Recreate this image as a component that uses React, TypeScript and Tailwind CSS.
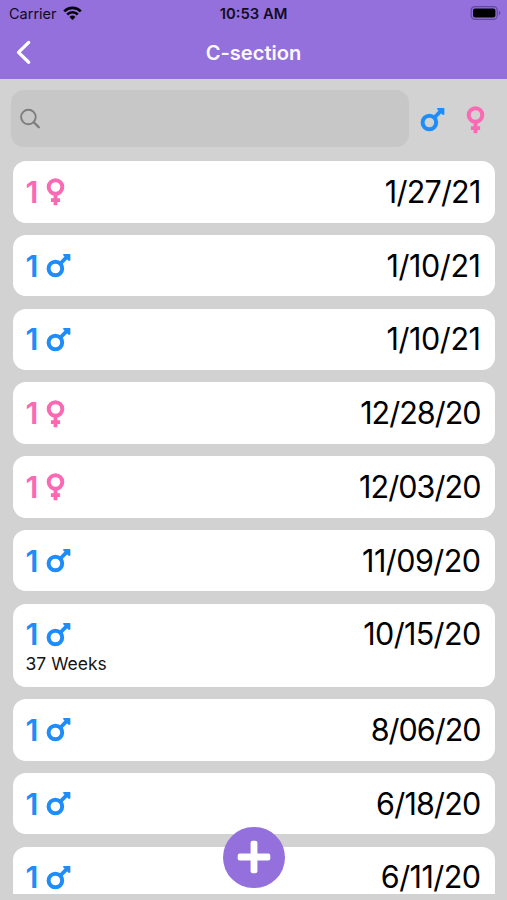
import React from 'react';

type Sex = 'male' | 'female';

interface Birth {
  sex: Sex;
  date: string;
  tracking: string;
  note?: string;
}

const births: Birth[] = [
  { sex: 'female', date: '1/27/21', tracking: 'tracking-[-0.8px]' },
  { sex: 'male', date: '1/10/21', tracking: 'tracking-[-0.45px]' },
  { sex: 'male', date: '1/10/21', tracking: 'tracking-[-0.45px]' },
  { sex: 'female', date: '12/28/20', tracking: 'tracking-[-1px]' },
  { sex: 'female', date: '12/03/20', tracking: 'tracking-[-0.93px]' },
  { sex: 'male', date: '11/09/20', tracking: 'tracking-[-0.55px]' },
  { sex: 'male', date: '10/15/20', tracking: 'tracking-[-0.65px]', note: '37 Weeks' },
  { sex: 'male', date: '8/06/20', tracking: 'tracking-[-1px]' },
  { sex: 'male', date: '6/18/20', tracking: 'tracking-[-0.8px]' },
  { sex: 'male', date: '6/11/20', tracking: 'tracking-[-0.55px]' },
];

function SexIcon({ sex }: { sex: Sex }) {
  if (sex === 'male') {
    return (
      <svg width="26" height="30" viewBox="0 0 26 30" className="text-[#1e8cf9]">
        <circle cx="9.4" cy="18.5" r="6.8" fill="none" stroke="currentColor" strokeWidth="4" />
        <path d="M13.8 14.1 20.5 7.4" stroke="currentColor" strokeWidth="3.7" />
        <path d="M18 4h5.6a.8.8 0 0 1 .8.8v5.6l-1.6.5-6.1-6.1z" fill="currentColor" />
      </svg>
    );
  }
  return (
    <svg width="26" height="30" viewBox="0 0 26 30" className="text-[#fb69b4]">
      <circle cx="9.5" cy="11" r="6.8" fill="none" stroke="currentColor" strokeWidth="4" />
      <path d="M9.5 18v11.2M4.9 24.1h9.2" fill="none" stroke="currentColor" strokeWidth="3.8" />
    </svg>
  );
}

function StatusBar() {
  return (
    <div className="flex h-[28px] items-center pl-[9px] pr-[6px] text-[#120b22]">
      <div className="flex flex-1 items-center gap-[6px]">
        <span className="text-[14.5px] leading-none">Carrier</span>
        <svg width="19" height="15" viewBox="0 0 19 15" fill="none" stroke="#06030c" strokeWidth="2.6" className="-mt-[1.5px]">
          <path d="M1.2 5.3a11.7 11.7 0 0 1 16.6 0" />
          <path d="M4.2 8.5a7.5 7.5 0 0 1 10.6 0" />
          <path d="M9.5 14 6.5 11a4.3 4.3 0 0 1 6 0z" fill="#06030c" stroke="none" />
        </svg>
      </div>
      <span className="pr-[3px] text-[14.8px] font-semibold leading-none">10:53 AM</span>
      <div className="flex flex-1 justify-end">
        <svg width="31" height="14" viewBox="0 0 31 14" className="-mt-[1.5px]">
          <rect x="1.2" y=".7" width="26" height="12.6" rx="3.6" fill="none" stroke="#62499a" strokeWidth="1.2" />
          <rect x="3" y="2.5" width="22.4" height="9" rx="2" fill="#000" />
          <path d="M28.8 4.8c2 .7 2 3.7 0 4.4z" fill="#62499a" />
        </svg>
      </div>
    </div>
  );
}

function BirthCard({ birth }: { birth: Birth }) {
  return (
    <li
      className={`shrink-0 rounded-[13px] bg-white pl-[12.5px] pr-[14px] ${birth.note ? 'h-[83.4px]' : 'h-[61.5px]'}`}
    >
      <div className="flex h-[61.5px] items-center justify-between pt-[0.6px]">
        <div
          className={`flex items-center gap-[3.5px] ${birth.sex === 'male' ? 'text-[#1e8cf9]' : 'text-[#fb69b4]'}`}
        >
          <span className="w-[17px] text-[30.5px] font-semibold leading-none">1</span>
          <span className="-mt-[1.6px]">
            <SexIcon sex={birth.sex} />
          </span>
        </div>
        <span className={`text-[30.5px] leading-none text-black ${birth.tracking}`}>{birth.date}</span>
      </div>
      {birth.note && <p className="-mt-[11px] text-[17.5px] leading-[20px] text-[#151515]">{birth.note}</p>}
    </li>
  );
}

export default function App() {
  return (
    <div className="relative flex h-[900px] w-[507px] flex-col overflow-hidden bg-[#d2d2d2] font-['Inter','Liberation_Sans',sans-serif]">
      <header className="h-[79px] shrink-0 bg-[#9370db]">
        <StatusBar />
        <div className="flex h-[50px] items-center">
          <button className="flex w-[60px] pl-[16px]" aria-label="Back">
            <svg width="16" height="26" viewBox="0 0 16 26" fill="none" stroke="#fff" strokeWidth="3.3" strokeLinecap="round" strokeLinejoin="round">
              <path d="M12.7 2.4 2.5 12.4l10.2 9.8" />
            </svg>
          </button>
          <h1 className="flex-1 text-center text-[20.1px] font-semibold leading-none text-[#fcf8ff]">C-section</h1>
          <div className="w-[60px]" />
        </div>
      </header>

      <div className="flex h-[82.2px] shrink-0 pl-[11px] pt-[11px]">
        <div className="flex h-[57px] w-[398px] items-center rounded-[13px] bg-[#c7c7c7] pl-[9px]">
          <svg width="22" height="22" viewBox="0 0 22 22" fill="none" stroke="#7d7d7d" strokeWidth="1.9" strokeLinecap="round">
            <circle cx="8.4" cy="9" r="7.3" />
            <path d="m13.8 14.3 5 4.9" strokeWidth="2.3" />
          </svg>
        </div>
        <div className="flex h-[57px] items-center gap-[20px] pl-[11px]">
          <SexIcon sex="male" />
          <SexIcon sex="female" />
        </div>
      </div>

      <ul className="flex h-[732.8px] shrink-0 flex-col gap-[12.22px] overflow-hidden pl-[13px] pr-[12.5px]">
        {births.map((birth, i) => (
          <BirthCard key={i} birth={birth} />
        ))}
      </ul>

      <button
        className="absolute left-[223px] top-[826.5px] flex size-[61.5px] items-center justify-center rounded-full bg-[#9370db]"
        aria-label="Add"
      >
        <svg width="34" height="34" viewBox="0 0 34 34" fill="#fff">
          <rect x="13.6" y=".7" width="6.8" height="32.6" rx="2" />
          <rect x=".7" y="13.6" width="32.6" height="6.8" rx="2" />
        </svg>
      </button>
    </div>
  );
}
